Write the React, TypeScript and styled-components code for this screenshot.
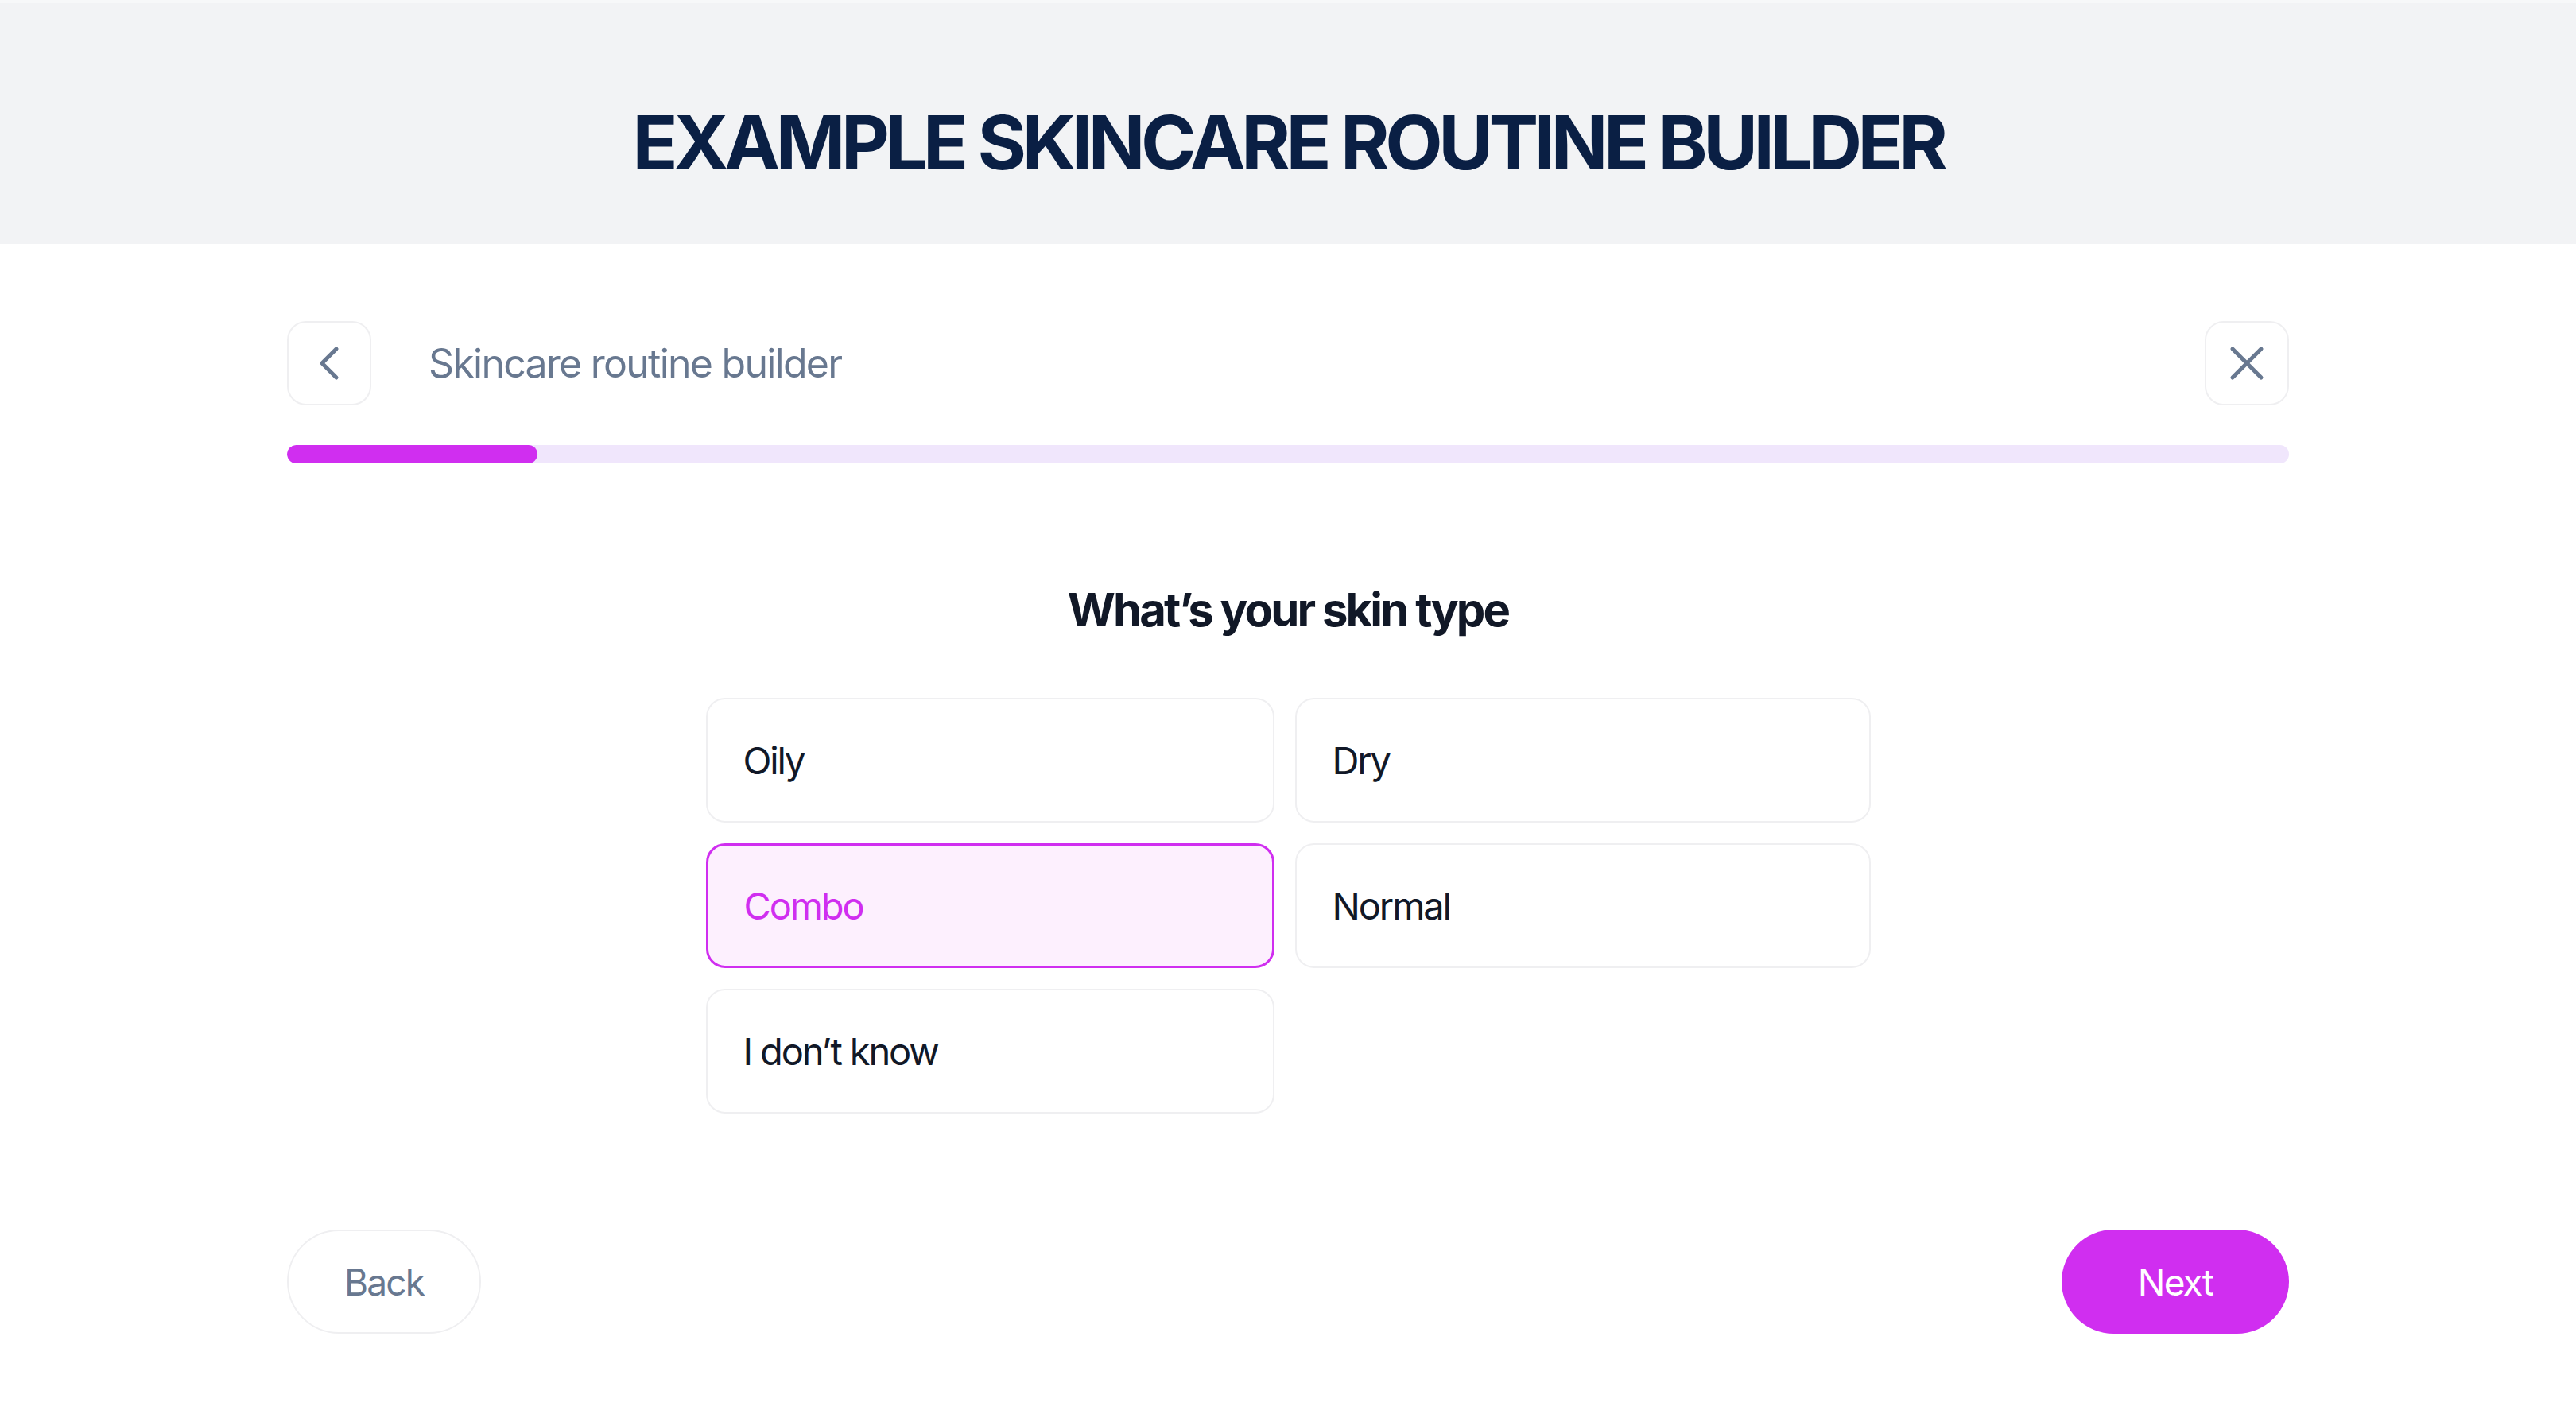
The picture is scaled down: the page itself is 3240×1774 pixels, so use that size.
import React, { FC, useState } from 'react'
import styled, { createGlobalStyle } from 'styled-components'
import { ChevronLeft, X } from 'lucide-react'

const GlobalStyle = createGlobalStyle`
	* {
		box-sizing: border-box;
	}
	body {
		margin: 0;
		background: #ffffff;
		font-family: Inter, 'Noto Sans', 'Liberation Sans', sans-serif;
		-webkit-font-smoothing: antialiased;
	}
`

const ACCENT = '#d02ef0'
const MUTED = '#687890'

const options = ['Oily', 'Dry', 'Combo', 'Normal', 'I don’t know']

const App: FC = () => {
	const [selected, setSelected] = useState('Combo')
	const step = 1
	const total = 8

	return (
		<>
			<GlobalStyle />
			<Header>
				<PageTitle>EXAMPLE SKINCARE ROUTINE BUILDER</PageTitle>
			</Header>
			<Main>
				<Toolbar>
					<IconButton aria-label='Back'>
						<ChevronLeft size={72} strokeWidth={1.7} color={MUTED} />
					</IconButton>
					<ToolbarTitle>Skincare routine builder</ToolbarTitle>
					<IconButton aria-label='Close'>
						<X size={72} strokeWidth={1.7} color={MUTED} />
					</IconButton>
				</Toolbar>
				<Track>
					<Fill style={{ width: `${(step / total) * 100}%` }} />
				</Track>
				<Question>What’s your skin type</Question>
				<OptionGrid>
					{options.map((label) => (
						<Option
							key={label}
							$active={selected === label}
							onClick={() => setSelected(label)}
						>
							{label}
						</Option>
					))}
				</OptionGrid>
				<Footer>
					<PillButton $variant='ghost'>Back</PillButton>
					<PillButton $variant='primary'>Next</PillButton>
				</Footer>
			</Main>
		</>
	)
}

const Header = styled.header`
	height: 307px;
	padding-top: 128px;
	background: #f2f3f5;
	border-top: 4px solid #f7f8f9;
`

const PageTitle = styled.h1`
	margin: 0;
	text-align: center;
	font-size: 94px;
	line-height: 1;
	font-weight: 700;
	letter-spacing: -0.058em;
	color: #0a1f44;
`

const Main = styled.main`
	width: 2518px;
	margin: 0 auto;
	padding-top: 97px;
`

const Toolbar = styled.div`
	display: flex;
	align-items: center;
	gap: 72px;
`

const IconButton = styled.button`
	width: 106px;
	height: 106px;
	flex: none;
	display: flex;
	align-items: center;
	justify-content: center;
	padding: 0;
	background: #ffffff;
	border: 2px solid #efeff1;
	border-radius: 24px;
	cursor: pointer;
`

const ToolbarTitle = styled.div`
	flex: 1;
	font-size: 50px;
	font-weight: 400;
	letter-spacing: -0.035em;
	color: ${MUTED};
`

const Track = styled.div`
	height: 23px;
	margin-top: 50px;
	border-radius: 12px;
	background: #f0e6fc;
	overflow: hidden;
`

const Fill = styled.div`
	height: 100%;
	border-radius: 12px;
	background: ${ACCENT};
`

const Question = styled.h2`
	margin: 149px 0 0;
	text-align: center;
	font-size: 58px;
	line-height: 70px;
	font-weight: 700;
	letter-spacing: -0.05em;
	color: #111827;
`

const OptionGrid = styled.div`
	width: 1465px;
	margin: 76px auto 0;
	display: grid;
	grid-template-columns: 715px 724px;
	grid-auto-rows: 157px;
	gap: 26px;
`

const Option = styled.button<{ $active: boolean }>`
	display: flex;
	align-items: center;
	padding: 0 45px;
	font-family: inherit;
	font-size: 47px;
	font-weight: 400;
	letter-spacing: -0.045em;
	text-align: left;
	border-radius: 24px;
	cursor: pointer;
	border: ${({ $active }) => ($active ? `3px solid ${ACCENT}` : '2px solid #efeff1')};
	background: ${({ $active }) => ($active ? '#fdf0fe' : '#ffffff')};
	color: ${({ $active }) => ($active ? ACCENT : '#111827')};
`

const Footer = styled.div`
	margin-top: 146px;
	display: flex;
	justify-content: space-between;
	align-items: center;
`

const PillButton = styled.button<{ $variant: 'ghost' | 'primary' }>`
	height: 131px;
	padding: ${({ $variant }) => ($variant === 'primary' ? '0 96px' : '0 70px')};
	border-radius: 66px;
	font-family: inherit;
	font-size: 46px;
	font-weight: 400;
	letter-spacing: -0.04em;
	cursor: pointer;
	border: ${({ $variant }) => ($variant === 'primary' ? 'none' : '2px solid #efeff1')};
	background: ${({ $variant }) => ($variant === 'primary' ? ACCENT : '#ffffff')};
	color: ${({ $variant }) => ($variant === 'primary' ? '#ffffff' : MUTED)};
`

export default App
